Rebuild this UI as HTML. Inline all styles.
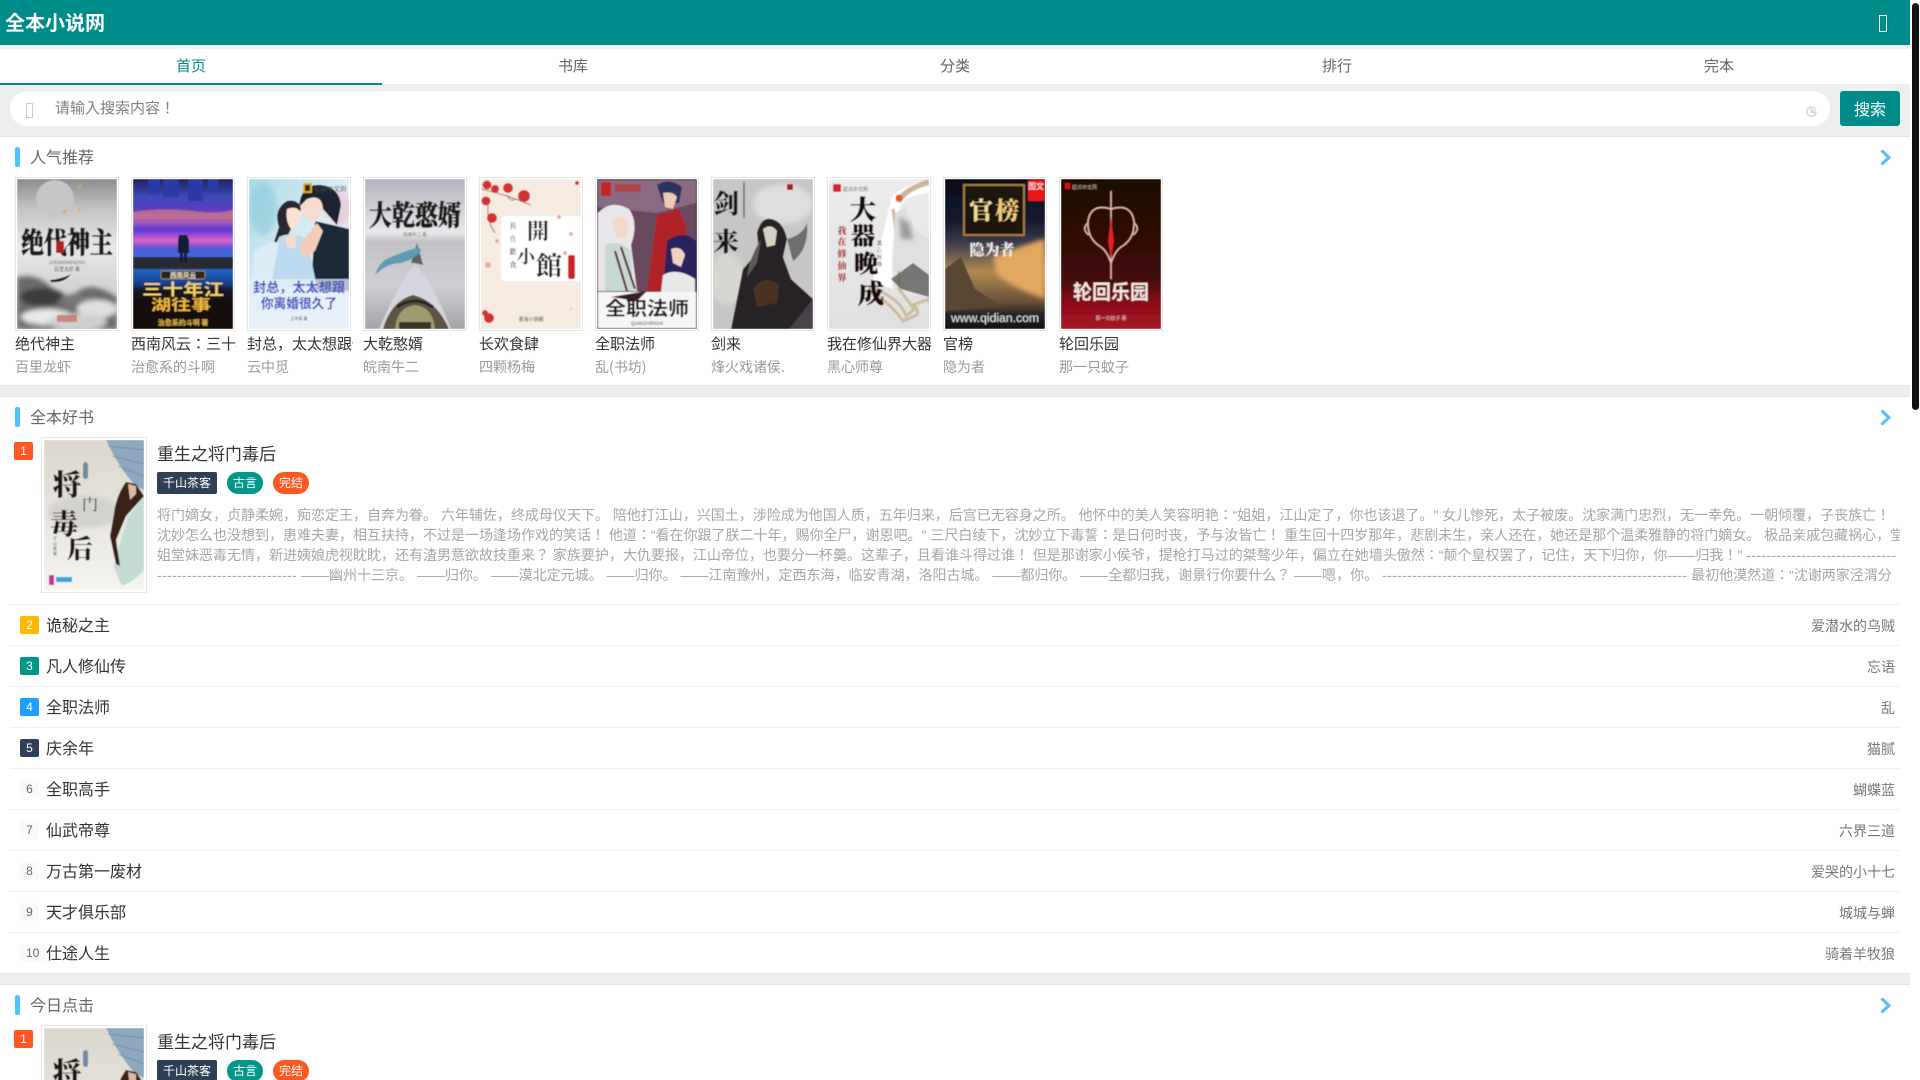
<!DOCTYPE html>
<html lang="ja"><head><meta charset="utf-8"><title>全本小说网</title>
<style>
*{margin:0;padding:0;box-sizing:border-box}
html,body{width:1920px;height:1080px;overflow:hidden;background:#fff}
body{position:relative;font-family:"Noto Sans CJK JP",sans-serif;color:#333}
.a{position:absolute;white-space:nowrap}
.gr{background:#eee;left:0;width:1910px}
.sec{left:0;width:1910px;background:#fff;border-top:1px solid #e4e4e4;border-bottom:1px solid #e4e4e4}
.tab{top:49px;width:382px;height:34px;line-height:34px;text-align:center;font-size:15px;color:#666}
.bar{left:15px;width:5px;height:20px;border-radius:2px;background:#4fc3f7}
.ht{left:30px;height:20px;line-height:20px;font-size:16px;color:#666}
.cov{width:104px;height:154px;top:177px;border:1px solid #e6e6e6;padding:1px;background:#fff}
.cov svg,.big svg{display:block;width:100px;height:150px}
.bt{top:334px;width:106px;height:20px;line-height:20px;font-size:15px;color:#333;overflow:hidden}
.ba{top:357px;width:106px;height:20px;line-height:20px;font-size:14px;color:#999;overflow:hidden}
.big{left:41px;width:106px;height:156px;border:1px solid #e6e6e6;padding:2px;background:#fff;overflow:hidden}
.bk{height:18px;line-height:18px;font-size:12px;border-radius:2px;text-align:center;color:#fff;min-width:19px;padding:0 6px;font-family:"Liberation Sans",sans-serif}
.tag{height:22px;line-height:22px;font-size:12px;color:#fff;text-align:center}
.line{left:10px;width:1890px;height:1px;background:#eee}
.rt{left:46px;height:20px;line-height:20px;font-size:16px;color:#333}
.ra{right:25px;height:20px;line-height:20px;font-size:14px;color:#777}
.d{left:157px;height:20px;line-height:20px;font-size:14px;color:#a6a6a6;width:1743px;overflow:hidden;margin-top:1px;font-family:"Liberation Sans","Noto Sans CJK JP",sans-serif}
.h{letter-spacing:.34px}
</style></head><body>
<svg width="0" height="0" style="position:absolute"><defs>
<filter id="b" x="-5%" y="-5%" width="110%" height="110%"><feGaussianBlur stdDeviation=".45"/></filter>
<filter id="s" x="-20%" y="-20%" width="140%" height="140%"><feGaussianBlur stdDeviation="2.5"/></filter>
<linearGradient id="c11" x1="0" y1="0" x2="0" y2="1"><stop offset="0" stop-color="#dcd8ce"/><stop offset=".5" stop-color="#e6e4de"/><stop offset="1" stop-color="#f4f4f0"/></linearGradient>
</defs></svg>

<div class="a" style="left:0;top:0;width:1910px;height:45px;background:#008b8b"></div>
<div class="a" style="left:5px;top:7px;height:30px;line-height:30px;font-size:20px;font-weight:bold;color:#fff">全本小说网</div>
<div class="a" style="left:1879px;top:15px;width:8px;height:17px;border:1.5px solid #fff"></div>

<div class="a gr" style="top:45px;height:4px"></div>
<div class="a" style="left:0;top:49px;width:1910px;height:35px;background:#fff"></div>
<div class="a tab" style="left:0;color:#008b8b">首页</div>
<div class="a tab" style="left:382px">书库</div>
<div class="a tab" style="left:764px">分类</div>
<div class="a tab" style="left:1146px">排行</div>
<div class="a tab" style="left:1528px">完本</div>

<div class="a gr" style="top:84px;height:52px"></div>
<div class="a" style="left:0;top:83px;width:382px;height:2px;background:#008b8b"></div>
<div class="a" style="left:10px;top:91px;width:1820px;height:35px;background:#fff;border-radius:17px"></div>
<div class="a" style="left:26px;top:103px;width:7px;height:15px;border:1px solid #ccc"></div>
<div class="a" style="left:55px;top:98px;height:20px;line-height:20px;font-size:15px;color:#808080">请输入搜索内容！</div>
<svg class="a" style="left:1805px;top:105px" width="13" height="13" viewBox="0 0 13 13"><path d="M6 2.2A4.6 4.6 0 1 0 11 7.4H6.4Z" fill="none" stroke="#d8d8d8" stroke-width="1.6"/><circle cx="8.6" cy="4" r="1.8" fill="none" stroke="#d8d8d8" stroke-width="1.2"/></svg>
<div class="a" style="left:1840px;top:91px;width:60px;height:35px;line-height:35px;text-align:center;background:#008b8b;border-radius:3px;color:#fff;font-size:16px">搜索</div>

<div class="a sec" style="top:136px;height:250px"></div>
<div class="a gr" style="top:386px;height:10px"></div>
<div class="a sec" style="top:396px;height:578px"></div>
<div class="a gr" style="top:974px;height:10px"></div>
<div class="a" style="left:0;top:984px;width:1910px;height:1px;background:#e4e4e4"></div>

<!-- Section 1 -->
<div class="a bar" style="top:147px"></div><div class="a ht" style="top:146px">人气推荐</div>
<svg class="a" style="left:1879px;top:149px" width="13" height="17" viewBox="0 0 13 17"><path d="M2.5 1.5L10 8.5L2.5 15.5" fill="none" stroke="#4fc3f7" stroke-width="3"/></svg>

<div class="a cov" style="left:15px"><svg viewBox="0 0 100 150"><g filter="url(#b)">
<defs><linearGradient id="c1" x1="0" y1="0" x2="0" y2="1"><stop offset="0" stop-color="#8c8c8c"/><stop offset=".2" stop-color="#c4c4c4"/><stop offset=".45" stop-color="#e8e8e8"/><stop offset=".62" stop-color="#dcdcdc"/><stop offset="1" stop-color="#bcbcbc"/></linearGradient></defs>
<rect width="100" height="150" fill="url(#c1)"/>
<circle cx="38" cy="20" r="19" fill="#c6c6c6"/>
<path d="M60 8l6-4-3 5zM44 33l8-3-4 4zM60 30l5-1-3 3z" fill="#e0a52c"/>
<text x="50" y="74" text-anchor="middle" font-family="Noto Serif CJK SC" font-weight="900" font-size="29" textLength="92" lengthAdjust="spacingAndGlyphs" fill="#1a1a1a" stroke="#1a1a1a" stroke-width=".6">绝代神主</text>
<rect x="39" y="62" width="8" height="12" fill="#b02020"/>
<text x="50" y="85" text-anchor="middle" font-size="4.5" fill="#555">JUEDAISHENZHU</text>
<text x="50" y="92" text-anchor="middle" font-size="5" fill="#555">百里龙虾 著</text>
<g filter="url(#s)"><path d="M0 98Q20 94 34 108T62 112T100 118V150H0Z" fill="#6a6a6a"/><ellipse cx="25" cy="118" rx="22" ry="9" fill="#3c3c3c"/><ellipse cx="60" cy="122" rx="18" ry="6" fill="#777"/><ellipse cx="30" cy="138" rx="26" ry="8" fill="#e8e8e8"/><ellipse cx="80" cy="130" rx="20" ry="9" fill="#e0e0e0"/><ellipse cx="60" cy="143" rx="30" ry="8" fill="#cfcfcf"/></g>
<path d="M33 101Q45 100 54 95Q48 104 34 103Z" fill="#222"/>
<rect x="40" y="136" width="20" height="7" fill="#c9544a" opacity=".6"/>
</g></svg></div>

<div class="a cov" style="left:131px"><svg viewBox="0 0 100 150"><g filter="url(#b)">
<defs><linearGradient id="c2" x1="0" y1="0" x2="0" y2="1"><stop offset="0" stop-color="#24205e"/><stop offset=".12" stop-color="#3a4ab8"/><stop offset=".2" stop-color="#5a3cc0"/><stop offset=".28" stop-color="#b060b0"/><stop offset=".34" stop-color="#5a3ad8"/><stop offset=".41" stop-color="#e060c8"/><stop offset=".46" stop-color="#5858d8"/><stop offset=".56" stop-color="#2878d8"/><stop offset=".7" stop-color="#143e90"/><stop offset=".74" stop-color="#1a1a26"/><stop offset=".85" stop-color="#120a0a"/><stop offset="1" stop-color="#1a0806"/></linearGradient></defs>
<rect width="100" height="150" fill="url(#c2)"/>
<path d="M15 0h12v15h-12zM30 0h16v18h-16zM55 0h15v22H55zM75 0h10v12H75z" fill="#2a3aa8"/>
<path d="M0 33Q30 28 60 32T100 30V40H0Z" fill="#d07a80" opacity=".7"/>
<path d="M0 78L30 78H70L100 78V90H0Z" fill="#2a2a34"/>
<path d="M46 56h8l2 5v13h-2v9h-3v-9h-1v9h-3v-9h-2V61z" fill="#141a30"/>
<rect x="28" y="92" width="44" height="8" rx="2" fill="#2a2622" stroke="#c0a050" stroke-width=".7"/>
<text x="50" y="98.5" text-anchor="middle" font-size="6.5" font-weight="bold" fill="#f0e8d0">西南风云</text>
<text x="50" y="116" text-anchor="middle" font-size="16" font-weight="bold" textLength="82" lengthAdjust="spacingAndGlyphs" fill="#f5d060">三十年江</text>
<text x="48" y="131" text-anchor="middle" font-size="15" font-weight="bold" textLength="60" lengthAdjust="spacingAndGlyphs" fill="#efb83c">湖往事</text>
<text x="50" y="146" text-anchor="middle" font-size="7" font-weight="bold" fill="#e8c050">治愈系的斗啊 著</text>
</g></svg></div>

<div class="a cov" style="left:247px"><svg viewBox="0 0 100 150"><g filter="url(#b)">
<defs><linearGradient id="c3" x1="0" y1="0" x2="1" y2="1"><stop offset="0" stop-color="#a8dce8"/><stop offset=".5" stop-color="#dcecf4"/><stop offset="1" stop-color="#e8f0f8"/></linearGradient></defs>
<rect width="100" height="150" fill="url(#c3)"/>
<ellipse cx="14" cy="30" rx="14" ry="26" fill="#8ccad8" opacity=".6" filter="url(#s)"/>
<ellipse cx="90" cy="30" rx="12" ry="18" fill="#f0c0d0" opacity=".6" filter="url(#s)"/>
<path d="M66 42L100 50V112H62Z" fill="#1e2a38"/>
<path d="M50 28Q52 4 72 6Q90 8 92 26L88 46L74 30Z" fill="#1c2430"/>
<path d="M58 20Q74 14 74 32L66 44Q54 38 50 28Z" fill="#f6dcd0"/>
<path d="M30 48Q24 30 38 22Q50 20 52 30L40 54L34 72L24 66Z" fill="#2a2630"/>
<path d="M38 30Q48 26 52 34L50 46L42 50Q36 42 38 30Z" fill="#f8e0d4"/>
<path d="M30 58Q42 52 58 60L68 108H8Z" fill="#bcdaf0"/>
<path d="M6 72Q22 60 30 64L22 106H2Z" fill="#dcecf6"/>
<path d="M36 58L48 54L46 70L38 68Z" fill="#f6dcd0"/>
<path d="M50 66L68 44L74 52L66 72L54 80Z" fill="#f4ccbc"/>
<rect x="0" y="100" width="100" height="50" fill="#e8f0fa" opacity=".75"/>
<text x="50" y="113" text-anchor="middle" font-size="13" font-weight="bold" textLength="92" lengthAdjust="spacingAndGlyphs" fill="#3c50c0">封总，太太想跟</text>
<text x="50" y="129" text-anchor="middle" font-size="13" font-weight="bold" textLength="76" lengthAdjust="spacingAndGlyphs" fill="#3c50c0">你离婚很久了</text>
<rect x="54" y="4" width="9" height="10" fill="#eaa800"/><rect x="56" y="6" width="5" height="6" fill="#222"/>
<text x="65" y="12" font-size="6.5" fill="#444">七猫中文网</text>
<text x="50" y="141" text-anchor="middle" font-size="4" fill="#444">云中觅 著</text>
</g></svg></div>

<div class="a cov" style="left:363px"><svg viewBox="0 0 100 150"><g filter="url(#b)">
<defs><linearGradient id="c4" x1="0" y1="0" x2="0" y2="1"><stop offset="0" stop-color="#b4b4c0"/><stop offset=".2" stop-color="#d0d0d6"/><stop offset=".36" stop-color="#e8e8ea"/><stop offset=".42" stop-color="#c0c0c6"/><stop offset=".7" stop-color="#cfcfd4"/><stop offset="1" stop-color="#a4a4a8"/></linearGradient></defs>
<rect width="100" height="150" fill="url(#c4)"/>
<text x="50" y="46" text-anchor="middle" font-family="Noto Serif CJK SC" font-weight="900" font-size="28" textLength="92" lengthAdjust="spacingAndGlyphs" fill="#1c1c1c" stroke="#111" stroke-width=".5">大乾憨婿</text>
<text x="50" y="57" text-anchor="middle" font-size="4.5" fill="#666">皖南牛二 著</text>
<path d="M52 64L58 86L50 84L46 84Z" fill="#5a6460"/>
<path d="M54 68Q40 72 26 78Q14 82 10 96Q22 84 36 84Q50 80 56 72Z" fill="#5e9cb4"/>
<path d="M50 86Q36 100 14 150H86Q66 100 50 86Z" fill="#d6d6e0"/>
<path d="M18 150Q26 122 48 116Q72 122 84 150Z" fill="#5c5444"/>
<path d="M30 150Q32 128 50 126Q68 128 70 150Z" fill="#a09a70"/>
<path d="M32 128Q50 116 68 128" fill="none" stroke="#2a2520" stroke-width="3"/>
<path d="M34 143H66V150H34Z" fill="#1e1a14" opacity=".8"/>
</g></svg></div>

<div class="a cov" style="left:479px"><svg viewBox="0 0 100 150"><g filter="url(#b)">
<rect width="100" height="150" fill="#f6ebe1"/>
<rect x="20" y="37" width="80" height="65" rx="4" fill="#fff"/>
<path d="M0 10Q20 14 50 26M8 20Q4 40 14 54M26 16Q30 24 34 20" fill="none" stroke="#7a5050" stroke-width=".8"/>
<g fill="#d43030"><circle cx="6" cy="6" r="4.5"/><circle cx="14" cy="10" r="4"/><circle cx="27" cy="9" r="5"/><circle cx="5" cy="22" r="4.5"/><circle cx="43" cy="17" r="6"/><circle cx="11" cy="39" r="5"/><circle cx="96" cy="4" r="2"/><circle cx="4" cy="134" r="3"/><circle cx="8" cy="139" r="5"/></g>
<g fill="#f0a8a0"><circle cx="78" cy="38" r="2"/><circle cx="90" cy="55" r="2"/><circle cx="7" cy="86" r="3"/><circle cx="84" cy="74" r="2"/><circle cx="90" cy="130" r="1"/><circle cx="16" cy="62" r="2"/></g>
<text x="57" y="60" text-anchor="middle" font-size="22" font-family="Noto Serif CJK SC" font-weight="700" fill="#151515">開</text>
<text x="45" y="84" text-anchor="middle" font-size="18" font-family="Noto Serif CJK SC" font-weight="700" fill="#151515">小</text>
<text x="68" y="96" text-anchor="middle" font-size="26" font-family="Noto Serif CJK SC" font-weight="700" fill="#151515">館</text>
<g font-size="7" fill="#333" text-anchor="middle" font-family="Noto Serif CJK SC"><text x="32" y="49">長</text><text x="32" y="62">在</text><text x="32" y="75">歡</text><text x="32" y="88">食</text></g>
<rect x="87" y="76" width="7" height="24" rx="2" fill="#c82828"/>
<text x="50" y="142" text-anchor="middle" font-size="5" fill="#555">書海小說網</text>
</g></svg></div>

<div class="a cov" style="left:595px"><svg viewBox="0 0 100 150"><g filter="url(#b)">
<rect width="100" height="150" fill="#fff"/>
<rect x="1" y="1" width="98" height="112" fill="#6a4a5e"/>
<path d="M1 1H99V24L60 34L1 28Z" fill="#8a6a80"/>
<path d="M60 6Q72 -2 85 8L82 24L66 24Z" fill="#2c3060"/>
<path d="M66 14Q76 12 80 18L76 30L68 28Z" fill="#eec8b8"/>
<path d="M50 112L60 36L82 30L90 50L76 112Z" fill="#b02028"/>
<path d="M1 34Q14 20 32 30Q42 44 34 66L40 112H1Z" fill="#e8e6ea"/>
<path d="M14 42Q26 32 32 44L30 58L20 60Z" fill="#f2d8cc"/>
<path d="M8 66Q22 60 34 72L36 112H8Z" fill="#c8d8d4"/>
<path d="M18 72L30 112M24 68L38 110" stroke="#5a1c20" stroke-width="2"/>
<path d="M70 62Q86 50 99 62V112H66Z" fill="#2c2060"/>
<path d="M74 70Q84 66 88 76L84 88L76 84Z" fill="#f2d0c4"/>
<path d="M66 96Q80 88 98 100V113H64Z" fill="#e8e8e8"/>
<rect x="1" y="113" width="98" height="36" fill="#f6f6f6"/>
<path d="M14 118L50 112L40 122Z" fill="#3a1c2a"/>
<text x="50" y="136" text-anchor="middle" font-size="19" font-weight="bold" textLength="84" lengthAdjust="spacingAndGlyphs" fill="#241420">全职法师</text>
<text x="50" y="146" text-anchor="middle" font-size="4.5" fill="#222">QUANZHIFASHI</text>
<rect x="4" y="3" width="10" height="14" fill="#c02828"/><rect x="18" y="5" width="26" height="8" fill="#c03838" opacity=".7"/>
<rect x=".5" y=".5" width="99" height="149" fill="none" stroke="#2a2a2a"/>
</g></svg></div>

<div class="a cov" style="left:711px"><svg viewBox="0 0 100 150"><g filter="url(#b)">
<rect width="100" height="150" fill="#c8c6c4"/>
<ellipse cx="70" cy="25" rx="30" ry="20" fill="#e0dedc" filter="url(#s)"/>
<ellipse cx="14" cy="100" rx="18" ry="26" fill="#d8d6d0" filter="url(#s)"/>
<path d="M44 54Q48 38 58 40Q70 42 74 60L70 78L78 100L100 120V150H18L30 90L46 72Z" fill="#272228"/>
<path d="M74 60Q90 56 94 44Q96 70 80 82Z" fill="#6e6e70"/>
<path d="M50 50Q58 44 64 52L62 66L54 68Z" fill="#d8d0c4"/>
<path d="M40 110Q52 94 66 106L64 124L44 128Z" fill="#4a3022"/>
<path d="M48 60Q36 80 34 98L44 84Z" fill="#5a5a5c"/>
<path d="M100 150V120L76 150Z" fill="#4a4248"/>
<text x="13" y="34" text-anchor="middle" font-family="Noto Serif CJK SC" font-weight="900" font-size="26" fill="#151515">剑</text>
<text x="13" y="72" text-anchor="middle" font-family="Noto Serif CJK SC" font-weight="900" font-size="26" fill="#151515">来</text>
<rect x="30" y="3" width="2" height="36" fill="#333" opacity=".5"/>
<rect x="74" y="5" width="6" height="6" fill="#b02020"/>
</g></svg></div>

<div class="a cov" style="left:827px"><svg viewBox="0 0 100 150"><g filter="url(#b)">
<defs><linearGradient id="c8" x1="0" y1="0" x2="0" y2="1"><stop offset="0" stop-color="#ececec"/><stop offset="1" stop-color="#e0e0e0"/></linearGradient></defs>
<rect width="100" height="150" fill="url(#c8)"/>
<path d="M62 22Q60 12 100 0V14Q78 16 72 26Q60 60 64 110L44 102L50 70Z" fill="#fff"/>
<path d="M66 22Q74 8 100 0V6Q78 12 72 24Z" fill="#c8b898"/>
<path d="M64 30Q70 70 70 110L85 130Q80 135 77 137Q72 120 42 108L40 112Q60 122 74 142L88 136Q90 130 84 126L100 120V124" fill="none" stroke="#cdbc9c" stroke-width="3"/>
<path d="M66 34L76 28L86 50L100 60V100L64 90Z" fill="#e0e0e0"/>
<path d="M70 38L80 44L84 60L72 60Z" fill="#8a8a8a" opacity=".8" filter="url(#s)"/>
<path d="M62 100L84 84L100 96V118L72 110Z" fill="#5a5a5a" opacity=".8"/>
<circle cx="70" cy="19" r="3.5" fill="#e85a20"/>
<rect x="4" y="5" width="8" height="8" rx="1" fill="#d82030"/><text x="14" y="12" font-size="5" fill="#666">起点中文网</text>
<text x="34" y="40" text-anchor="middle" font-family="Noto Serif CJK SC" font-weight="900" font-size="26" stroke="#1c1010" stroke-width=".5" fill="#1c1010">大</text>
<text x="34" y="65" text-anchor="middle" font-family="Noto Serif CJK SC" font-weight="900" font-size="24" stroke="#1c1010" stroke-width=".5" fill="#1c1010">器</text>
<text x="37" y="93" text-anchor="middle" font-family="Noto Serif CJK SC" font-weight="900" font-size="24" stroke="#1c1010" stroke-width=".5" fill="#1c1010">晚</text>
<text x="42" y="124" text-anchor="middle" font-family="Noto Serif CJK SC" font-weight="900" font-size="26" stroke="#1c1010" stroke-width=".5" fill="#1c1010">成</text>
<g font-size="9" font-family="Noto Serif CJK SC" font-weight="900" fill="#a81818" text-anchor="middle"><text x="13" y="55">我</text><text x="13" y="66">在</text><text x="13" y="78">修</text><text x="13" y="90">仙</text><text x="13" y="102">界</text></g>
<g font-size="5" fill="#444"><text x="48" y="66">黑</text><text x="48" y="73">心</text><text x="48" y="80">师</text><text x="48" y="87">尊</text></g>
</g></svg></div>

<div class="a cov" style="left:943px"><svg viewBox="0 0 100 150"><g filter="url(#b)">
<defs><linearGradient id="c9" x1="0" y1="0" x2="0" y2="1"><stop offset="0" stop-color="#0c0c1a"/><stop offset=".28" stop-color="#141a30"/><stop offset=".42" stop-color="#3c3a4c"/><stop offset=".62" stop-color="#b08a50"/><stop offset=".82" stop-color="#6a5038"/><stop offset=".9" stop-color="#262628"/><stop offset="1" stop-color="#141416"/></linearGradient></defs>
<rect width="100" height="150" fill="url(#c9)"/>
<path d="M48 78Q90 62 100 60V120Q70 110 52 96Z" fill="#e0a860" filter="url(#s)"/>
<path d="M0 90L16 78L30 110L58 128L0 132Z" fill="#5a4630"/>
<rect x="19" y="6" width="60" height="50" fill="#1c1410" stroke="#a67c38" stroke-width="2"/>
<text x="36" y="40" text-anchor="middle" font-size="24" font-family="Noto Serif CJK SC" font-weight="900" fill="#f0d890">官</text>
<text x="62" y="40" text-anchor="middle" font-size="24" font-family="Noto Serif CJK SC" font-weight="900" fill="#f0c878">榜</text>
<text x="47" y="76" text-anchor="middle" font-size="15" font-family="Noto Serif CJK SC" font-weight="900" fill="#ececec">隐为者</text>
<rect x="83" y="1" width="16" height="21" fill="#e81818"/>
<text x="91" y="10" text-anchor="middle" font-size="8" fill="#fff">图文</text>
<text x="50" y="143" text-anchor="middle" font-size="11.5" textLength="88" lengthAdjust="spacingAndGlyphs" fill="#e8e8e8" font-family="Liberation Sans">www.qidian.com</text>
</g></svg></div>

<div class="a cov" style="left:1059px"><svg viewBox="0 0 100 150"><g filter="url(#b)">
<defs><linearGradient id="c10" x1="0" y1="0" x2="0" y2="1"><stop offset="0" stop-color="#1c0a04"/><stop offset=".4" stop-color="#300806"/><stop offset=".68" stop-color="#460808"/><stop offset=".82" stop-color="#8a0c18"/><stop offset="1" stop-color="#a81828"/></linearGradient></defs>
<rect width="100" height="150" fill="url(#c10)"/>
<g fill="none" stroke="#e8b8a8" stroke-width="1.5"><path d="M50 12V100"/><path d="M50 30Q30 24 27 42Q26 60 40 68Q46 72 50 84"/><path d="M50 30Q70 24 73 42Q74 60 60 68Q54 72 50 84"/><path d="M27 44Q20 50 28 56M73 44Q80 50 72 56"/></g>
<path d="M50 38L53 62L50 80L47 62Z" fill="#e02020"/>
<text x="50" y="120" text-anchor="middle" font-size="20" font-weight="bold" textLength="76" lengthAdjust="spacingAndGlyphs" fill="#f4e8e0">轮回乐园</text>
<text x="50" y="141" text-anchor="middle" font-size="5" fill="#e8c8c0">那一只蚊子 著</text>
<rect x="4" y="4" width="5" height="6" fill="#d81010"/><text x="11" y="10" font-size="5" fill="#c8b8a8">起点中文网</text>
</g></svg></div>

<div class="a bt" style="left:15px">绝代神主</div><div class="a ba" style="left:15px">百里龙虾</div>
<div class="a bt" style="left:131px">西南风云：三十年江湖往事</div><div class="a ba" style="left:131px">治愈系的斗啊</div>
<div class="a bt" style="left:247px">封总，太太想跟你离婚很久了</div><div class="a ba" style="left:247px">云中觅</div>
<div class="a bt" style="left:363px">大乾憨婿</div><div class="a ba" style="left:363px">皖南牛二</div>
<div class="a bt" style="left:479px">长欢食肆</div><div class="a ba" style="left:479px">四颗杨梅</div>
<div class="a bt" style="left:595px">全职法师</div><div class="a ba" style="left:595px">乱(书坊)</div>
<div class="a bt" style="left:711px">剑来</div><div class="a ba" style="left:711px">烽火戏诸侯.</div>
<div class="a bt" style="left:827px">我在修仙界大器晚成</div><div class="a ba" style="left:827px">黑心师尊</div>
<div class="a bt" style="left:943px">官榜</div><div class="a ba" style="left:943px">隐为者</div>
<div class="a bt" style="left:1059px">轮回乐园</div><div class="a ba" style="left:1059px">那一只蚊子</div>

<!-- Section 2 -->
<div class="a bar" style="top:407px"></div><div class="a ht" style="top:406px">全本好书</div>
<svg class="a" style="left:1879px;top:409px" width="13" height="17" viewBox="0 0 13 17"><path d="M2.5 1.5L10 8.5L2.5 15.5" fill="none" stroke="#4fc3f7" stroke-width="3"/></svg>
<div class="a bk" style="left:14px;top:442px;background:#ff5722;padding:0;width:19px">1</div>
<div class="a big" style="top:437px"><svg viewBox="0 0 100 150"><g filter="url(#b)">
<rect width="100" height="150" fill="url(#c11)"/>
<ellipse cx="40" cy="72" rx="36" ry="16" fill="#c8c8c2" opacity=".6" filter="url(#s)"/>
<path d="M62 0H100V50L92 46Q76 30 62 0Z" fill="#8ea8c0"/>
<path d="M64 6L100 10M68 16L100 24M74 26L100 36" stroke="#5c7488" stroke-width=".6" fill="none"/>
<path d="M100 56L84 78L74 110L70 128L78 146Q92 140 100 130Z" fill="#c4dcd4"/>
<path d="M82 42Q72 56 70 74L66 96L72 124L76 126L72 100L82 76L100 56L92 44Z" fill="#3a2018"/>
<path d="M84 44L92 46L92 54L86 60Z" fill="#d8b8a8"/>
<text x="23" y="55" text-anchor="middle" font-family="Noto Serif CJK SC" font-weight="900" font-size="29" fill="#1e1612">将</text>
<text x="46" y="70" text-anchor="middle" font-family="Noto Serif CJK SC" font-size="16" fill="#2a2018">门</text>
<text x="20" y="94" text-anchor="middle" font-family="Noto Serif CJK SC" font-weight="900" font-size="28" fill="#1e1612">毒</text>
<text x="36" y="118" text-anchor="middle" font-family="Noto Serif CJK SC" font-weight="900" font-size="26" fill="#1e1612">后</text>
<rect x="39" y="22" width="5" height="17" rx="2.5" fill="#6f8ca0"/>
<g font-size="4" fill="#444"><text x="9" y="100">千</text><text x="9" y="105">山</text><text x="9" y="110">茶</text><text x="9" y="115">客</text></g>
<rect x="5" y="135" width="5" height="10" fill="#c03090"/><rect x="12" y="137" width="16" height="5" fill="#30a8e0"/>
</g></svg></div>
<div class="a" style="left:157px;top:443px;height:20px;line-height:20px;font-size:17px;color:#333">重生之将门毒后</div>
<div class="a tag" style="left:157px;top:472px;width:60px;background:#2f4056;border-radius:2px">千山茶客</div>
<div class="a tag" style="left:227px;top:472px;width:36px;background:#009688;border-radius:11px">古言</div>
<div class="a tag" style="left:273px;top:472px;width:36px;background:#ff5722;border-radius:11px">完结</div>
<div class="a d" style="top:504px">将门嫡女，贞静柔婉，痴恋定王，自奔为眷。 六年辅佐，终成母仪天下。 陪他打江山，兴国土，涉险成为他国人质，五年归来，后宫已无容身之所。 他怀中的美人笑容明艳：“姐姐，江山定了，你也该退了。" 女儿惨死，太子被废。沈家满门忠烈，无一幸免。一朝倾覆，子丧族亡！</div>
<div class="a d" style="top:524px">沈妙怎么也没想到，患难夫妻，相互扶持，不过是一场逢场作戏的笑话！ 他道：“看在你跟了朕二十年，赐你全尸，谢恩吧。" 三尺白绫下，沈妙立下毒誓：是日何时丧，予与汝皆亡！ 重生回十四岁那年，悲剧未生，亲人还在，她还是那个温柔雅静的将门嫡女。 极品亲戚包藏祸心，堂</div>
<div class="a d" style="top:544px">姐堂妹恶毒无情，新进姨娘虎视眈眈，还有渣男意欲故技重来？ 家族要护，大仇要报，江山帝位，也要分一杯羹。这辈子，且看谁斗得过谁！ 但是那谢家小侯爷，提枪打马过的桀骜少年，偏立在她墙头傲然：“颠个皇权罢了，记住，天下归你，你——归我！" <span class="h">------------------------------</span></div>
<div class="a d" style="top:564px"><span class="h">----------------------------</span> ——幽州十三京。 ——归你。 ——漠北定元城。 ——归你。 ——江南豫州，定西东海，临安青湖，洛阳古城。 ——都归你。 ——全都归我，谢景行你要什么？ ——嗯，你。 <span class="h">-------------------------------------------------------------</span> 最初他漠然道：“沈谢两家泾渭分</div>

<div class="a line" style="top:604px"></div><div class="a line" style="top:645px"></div><div class="a line" style="top:686px"></div><div class="a line" style="top:727px"></div><div class="a line" style="top:768px"></div><div class="a line" style="top:809px"></div><div class="a line" style="top:850px"></div><div class="a line" style="top:891px"></div><div class="a line" style="top:932px"></div>

<div class="a bk" style="left:20px;top:616px;background:#ffb800">2</div><div class="a rt" style="top:614px">诡秘之主</div><div class="a ra" style="top:616px">爱潜水的乌贼</div>
<div class="a bk" style="left:20px;top:657px;background:#009688">3</div><div class="a rt" style="top:655px">凡人修仙传</div><div class="a ra" style="top:657px">忘语</div>
<div class="a bk" style="left:20px;top:698px;background:#1e9fff">4</div><div class="a rt" style="top:696px">全职法师</div><div class="a ra" style="top:698px">乱</div>
<div class="a bk" style="left:20px;top:739px;background:#2f4056">5</div><div class="a rt" style="top:737px">庆余年</div><div class="a ra" style="top:739px">猫腻</div>
<div class="a bk" style="left:20px;top:780px;background:#fafafa;color:#666">6</div><div class="a rt" style="top:778px">全职高手</div><div class="a ra" style="top:780px">蝴蝶蓝</div>
<div class="a bk" style="left:20px;top:821px;background:#fafafa;color:#666">7</div><div class="a rt" style="top:819px">仙武帝尊</div><div class="a ra" style="top:821px">六界三道</div>
<div class="a bk" style="left:20px;top:862px;background:#fafafa;color:#666">8</div><div class="a rt" style="top:860px">万古第一废材</div><div class="a ra" style="top:862px">爱哭的小十七</div>
<div class="a bk" style="left:20px;top:903px;background:#fafafa;color:#666">9</div><div class="a rt" style="top:901px">天才俱乐部</div><div class="a ra" style="top:903px">城城与蝉</div>
<div class="a bk" style="left:20px;top:944px;background:#fafafa;color:#666">10</div><div class="a rt" style="top:942px">仕途人生</div><div class="a ra" style="top:944px">骑着羊牧狼</div>

<!-- Section 3 -->
<div class="a bar" style="top:995px"></div><div class="a ht" style="top:994px">今日点击</div>
<svg class="a" style="left:1879px;top:997px" width="13" height="17" viewBox="0 0 13 17"><path d="M2.5 1.5L10 8.5L2.5 15.5" fill="none" stroke="#4fc3f7" stroke-width="3"/></svg>
<div class="a bk" style="left:14px;top:1030px;background:#ff5722;padding:0;width:19px">1</div>
<div class="a big" style="top:1025px"><svg viewBox="0 0 100 150"><g filter="url(#b)">
<rect width="100" height="150" fill="url(#c11)"/>
<path d="M62 0H100V50L92 46Q76 30 62 0Z" fill="#8ea8c0"/>
<path d="M64 6L100 10M68 16L100 24M74 26L100 36" stroke="#5c7488" stroke-width=".6" fill="none"/>
<path d="M82 42Q72 56 70 74L66 96L72 124L76 126L72 100L82 76L100 56L92 44Z" fill="#3a2018"/>
<path d="M84 44L92 46L92 54L86 60Z" fill="#d8b8a8"/>
<text x="23" y="55" text-anchor="middle" font-family="Noto Serif CJK SC" font-weight="900" font-size="29" fill="#1e1612">将</text>
<rect x="39" y="22" width="5" height="17" rx="2.5" fill="#6f8ca0"/>
</g></svg></div>
<div class="a" style="left:157px;top:1031px;height:20px;line-height:20px;font-size:17px;color:#333">重生之将门毒后</div>
<div class="a tag" style="left:157px;top:1060px;width:60px;background:#2f4056;border-radius:2px">千山茶客</div>
<div class="a tag" style="left:227px;top:1060px;width:36px;background:#009688;border-radius:11px">古言</div>
<div class="a tag" style="left:273px;top:1060px;width:36px;background:#ff5722;border-radius:11px">完结</div>

<!-- scrollbar -->
<div class="a" style="left:1912px;top:3px;width:7px;height:407px;background:#111;border-radius:4px"></div>
</body></html>
